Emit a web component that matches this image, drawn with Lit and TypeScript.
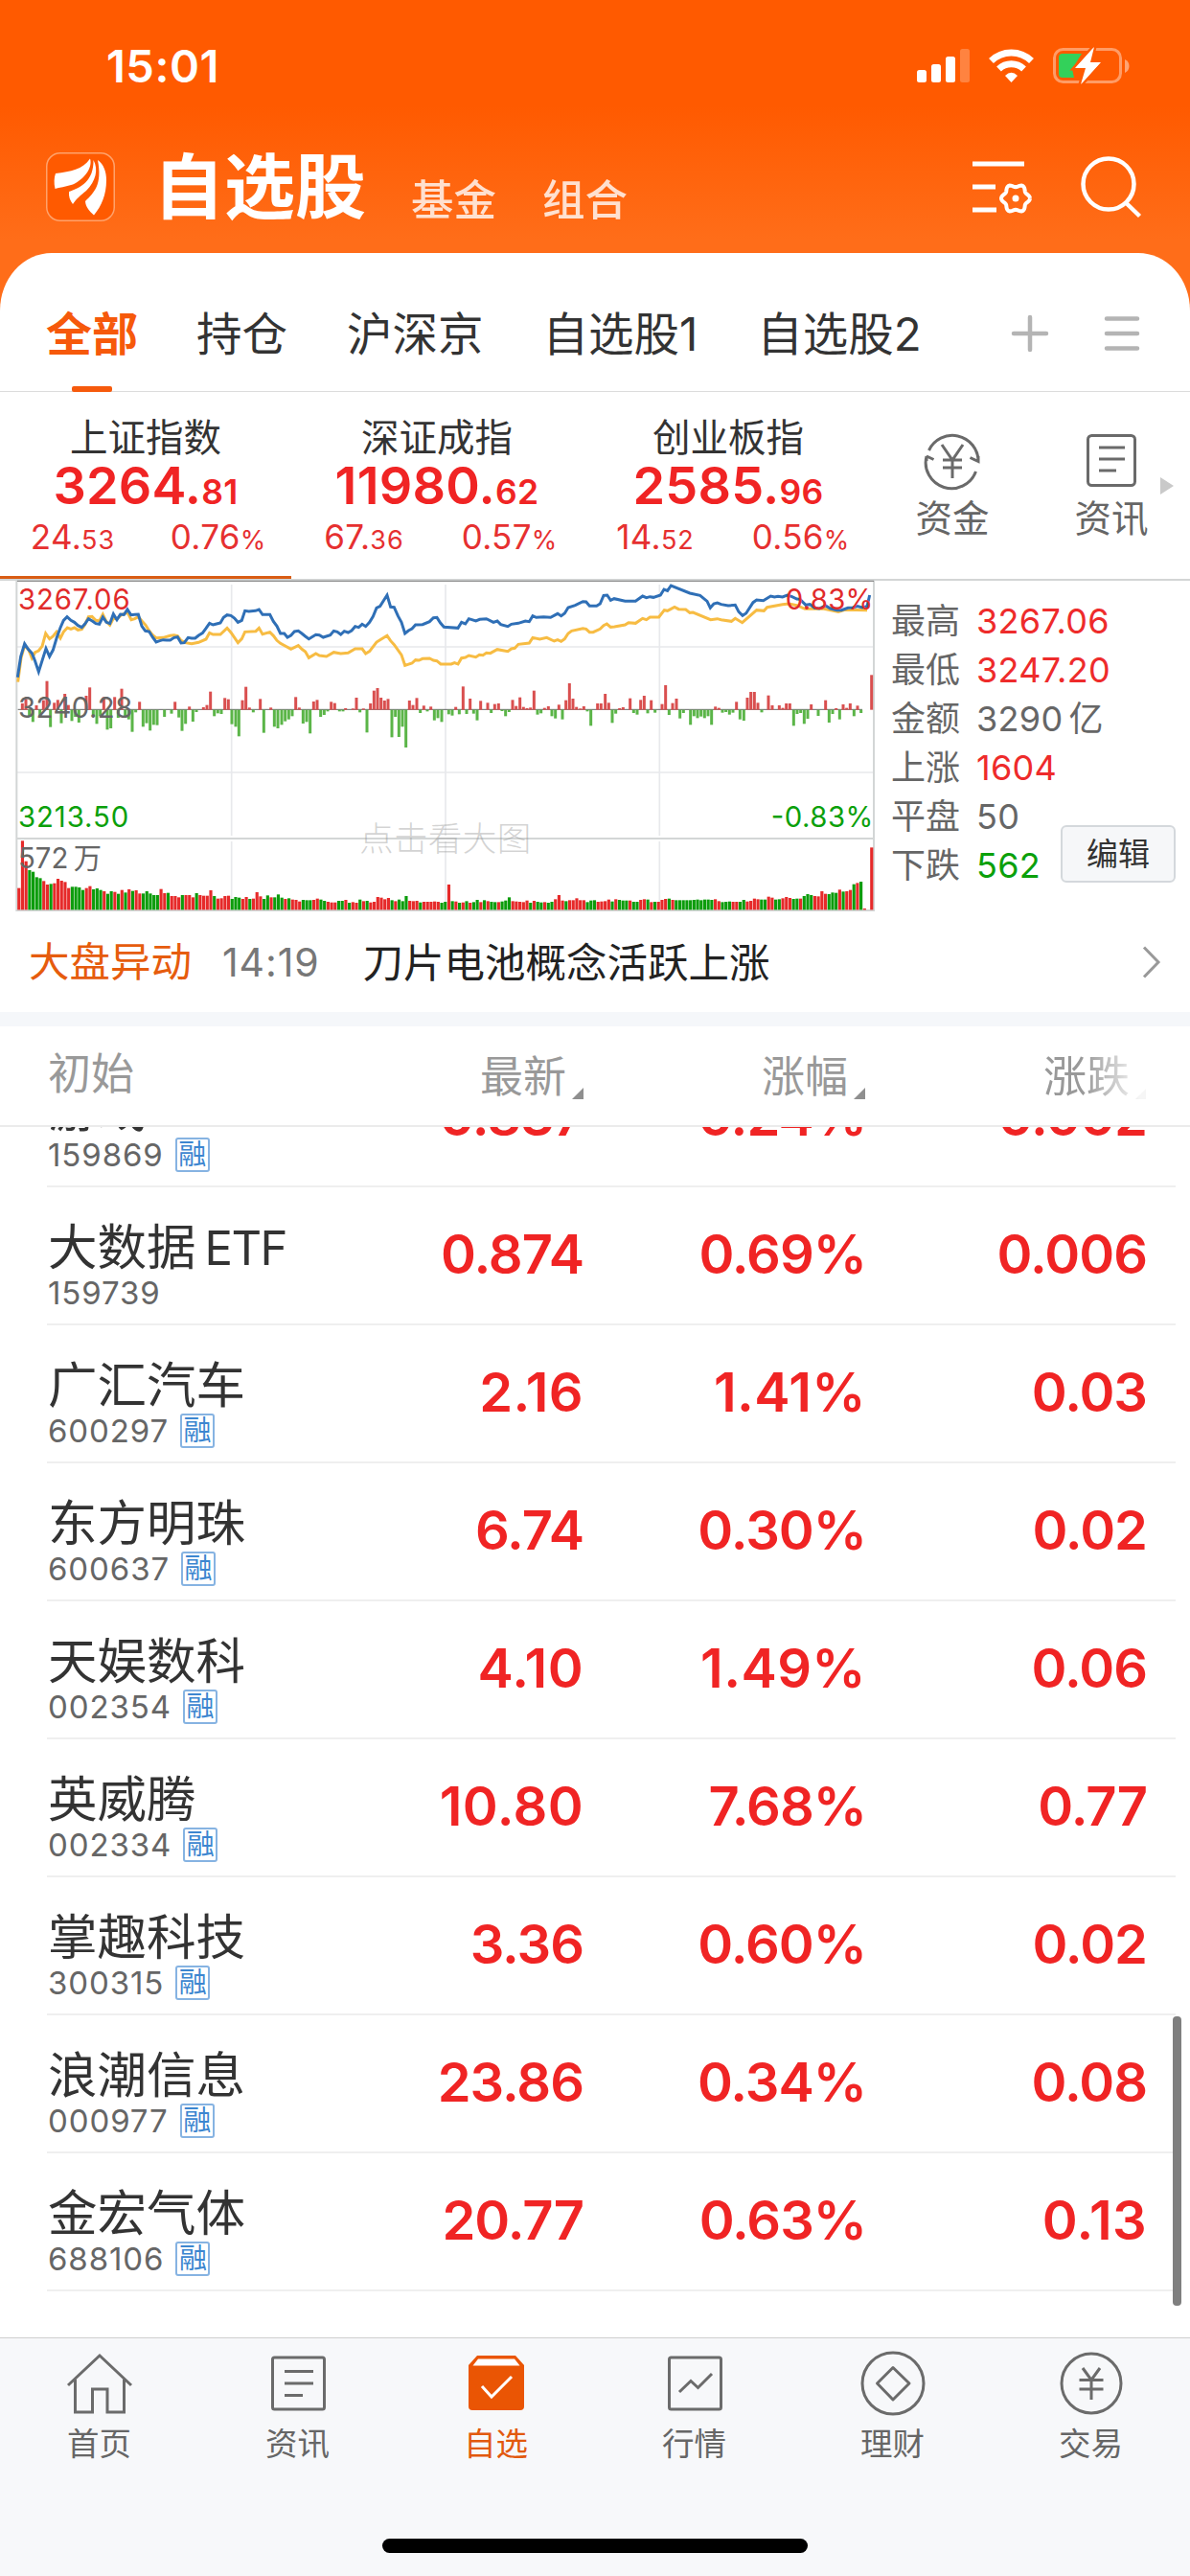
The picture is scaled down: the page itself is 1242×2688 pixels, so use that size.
import { LitElement, html, css, svg } from "lit";
import { customElement } from "lit/decorators.js";
import { classMap } from "lit/directives/class-map.js";

interface IndexQuote { name: string; int: string; dec: string; chg: string; chgDec: string; pct: string; active?: boolean }
interface Stock { name: string; latin?: string; code: string; margin: boolean; price: string; pct: string; chg: string }

const INDICES: IndexQuote[] = [
  { name: "上证指数", int: "3264.", dec: "81", chg: "24.", chgDec: "53", pct: "0.76", active: true },
  { name: "深证成指", int: "11980.", dec: "62", chg: "67.", chgDec: "36", pct: "0.57" },
  { name: "创业板指", int: "2585.", dec: "96", chg: "14.", chgDec: "52", pct: "0.56" },
];

const STATS: [string, string, string, string?][] = [
  ["最高", "3267.06", "up"],
  ["最低", "3247.20", "up"],
  ["金额", "3290", "flat", "亿"],
  ["上涨", "1604", "up"],
  ["平盘", "50", "flat"],
  ["下跌", "562", "down"],
];

const STOCKS: Stock[] = [
  { name: "游戏", latin: "ETF", code: "159869", margin: true, price: "0.837", pct: "0.24%", chg: "0.002" },
  { name: "大数据", latin: "ETF", code: "159739", margin: false, price: "0.874", pct: "0.69%", chg: "0.006" },
  { name: "广汇汽车", code: "600297", margin: true, price: "2.16", pct: "1.41%", chg: "0.03" },
  { name: "东方明珠", code: "600637", margin: true, price: "6.74", pct: "0.30%", chg: "0.02" },
  { name: "天娱数科", code: "002354", margin: true, price: "4.10", pct: "1.49%", chg: "0.06" },
  { name: "英威腾", code: "002334", margin: true, price: "10.80", pct: "7.68%", chg: "0.77" },
  { name: "掌趣科技", code: "300315", margin: true, price: "3.36", pct: "0.60%", chg: "0.02" },
  { name: "浪潮信息", code: "000977", margin: true, price: "23.86", pct: "0.34%", chg: "0.08" },
  { name: "金宏气体", code: "688106", margin: true, price: "20.77", pct: "0.63%", chg: "0.13" },
];

/* Intraday lines, in chart units (three per pixel). */
const BLUE = "55,350 65,285 77,245 88,262 100,275 110,300 121,333 132,298 144,260 155,285 166,265 178,225 189,195 199,172 210,161 222,172 233,178 244,188 256,194 266,183 277,167 289,174 300,182 311,184 322,162 333,178 344,182 355,152 366,170 377,153 388,154 399,138 410,155 422,154 433,153 444,190 455,205 467,207 478,225 489,240 500,236 511,233 522,234 533,234 545,226 556,224 567,243 577,242 589,226 600,228 611,228 622,219 634,212 645,197 656,181 667,186 678,183 690,180 700,163 711,155 723,157 734,165 745,178 757,172 767,142 779,144 800,142 811,138 822,154 845,154 856,175 867,190 878,213 890,213 900,225 911,219 922,207 934,205 945,213 956,222 967,230 989,217 1000,218 1012,225 1034,218 1045,205 1056,208 1067,216 1078,206 1090,210 1101,204 1112,191 1123,194 1134,184 1145,191 1157,178 1168,160 1179,133 1190,128 1212,93 1223,130 1234,131 1246,158 1257,178 1268,213 1279,204 1290,198 1301,186 1323,185 1345,176 1357,164 1368,163 1379,180 1390,193 1434,196 1445,178 1457,183 1468,167 1490,174 1502,169 1523,167 1545,178 1557,174 1568,185 1590,191 1601,184 1623,181 1645,174 1657,176 1668,158 1679,163 1702,161 1724,163 1746,151 1757,158 1768,150 1779,132 1801,125 1825,113 1835,114 1846,127 1868,127 1879,120 1890,94 1901,93 1912,109 1923,104 1957,112 1990,112 2012,96 2024,101 2035,98 2046,100 2068,93 2079,75 2090,79 2101,63 2160,87 2192,94 2214,112 2224,133 2235,120 2246,117 2258,122 2280,126 2302,124 2313,145 2325,157 2336,150 2358,116 2369,108 2390,110 2413,96 2425,99 2436,97 2450,99 2465,93 2480,98 2495,105 2505,106 2523,124 2536,122 2550,133 2565,135 2585,126 2600,135 2620,140 2635,140 2655,133 2670,132 2685,128 2700,132 2715,128 2723,93";
const YELLOW = "56,365 66,290 77,250 90,265 100,290 110,272 121,267 132,253 143,213 155,230 166,222 177,208 189,228 199,208 211,195 222,199 233,195 244,202 256,200 266,185 277,161 288,160 300,172 311,174 322,153 333,176 344,187 355,166 366,168 380,155 400,148 411,170 422,167 433,161 445,175 456,187 467,205 478,218 489,227 511,226 533,220 545,218 556,221 567,235 580,242 600,245 622,241 645,231 656,211 667,216 690,216 711,196 723,210 745,242 757,230 767,208 801,206 811,196 822,215 845,209 856,220 867,235 878,244 911,262 934,251 945,262 956,270 967,289 989,276 1000,282 1022,285 1045,272 1067,276 1090,274 1112,261 1134,261 1145,276 1157,269 1179,240 1190,233 1212,220 1223,236 1234,248 1257,280 1268,313 1290,306 1301,296 1312,297 1323,292 1345,291 1357,297 1368,299 1380,309 1413,309 1423,305 1434,309 1445,290 1457,288 1468,282 1490,287 1501,280 1512,281 1523,274 1535,275 1557,263 1590,269 1601,261 1612,259 1623,247 1657,243 1668,226 1690,231 1712,226 1735,237 1746,233 1757,238 1768,230 1779,213 1790,205 1825,197 1835,199 1846,209 1857,209 1879,199 1890,188 1900,183 1912,193 1924,192 1957,186 1968,179 1990,181 2012,166 2024,170 2035,162 2063,162 2080,140 2090,142 2112,130 2125,137 2147,138 2160,148 2170,147 2225,170 2246,167 2258,170 2290,175 2302,166 2324,179 2369,140 2392,142 2402,131 2450,122 2470,120 2495,125 2520,136 2580,136 2625,145 2645,139 2715,140";

/* Momentum bars: position and signed height. */
const MOMENTUM = "70:20 81:34 92:-20 103:-38 114:14 125:-20 136:30 147:90 158:-54 170:22 181:31 192:-42 203:50 214:15 225:-35 236:-22 247:-40 270:44 281:70 292:-20 303:-44 314:-20 325:40 336:-62 347:-58 359:40 370:-25 381:66 392:-25 403:-30 414:-69 425:-8 437:25 448:-53 459:-42 470:-65 481:-47 492:-48 515:-22 537:-12 548:25 560:-24 570:-66 581:-44 593:10 604:-37 615:-7 637:8 648:15 659:57 671:-20 682:-11 693:-13 704:37 715:33 726:-45 738:-53 748:-83 759:30 770:72 781:7 793:-8 815:34 826:-72 848:7 859:-53 870:-58 882:-47 893:-36 904:-30 915:-20 926:40 937:7 949:-43 960:-38 971:-74 982:26 993:31 1004:-22 1015:-16 1026:-5 1037:25 1048:21 1063:-5 1074:-5 1082:5 1105:4 1116:38 1127:-8 1138:4 1149:-71 1160:20 1171:60 1182:68 1193:38 1204:29 1215:34 1227:-86 1238:-22 1249:-85 1260:-53 1271:-118 1282:29 1293:15 1305:37 1316:-10 1327:13 1338:-5 1349:10 1360:-33 1371:-26 1383:-38 1405:-14 1416:-18 1427:9 1438:-14 1450:73 1461:-13 1472:35 1483:-12 1494:-33 1505:28 1527:22 1538:-10 1549:18 1561:20 1572:-4 1583:-20 1594:-7 1605:31 1616:12 1628:39 1639:9 1650:5 1661:7 1672:60 1683:-15 1694:-11 1705:6 1717:11 1728:-20 1739:-27 1750:16 1761:-30 1772:30 1783:83 1794:35 1805:9 1817:4 1828:11 1839:-5 1850:-50 1871:20 1882:20 1895:50 1906:22 1917:-41 1928:-12 1940:5 1951:8 1973:36 1984:-10 1995:-15 2006:31 2017:44 2028:-11 2039:30 2051:-9 2073:18 2084:77 2095:-16 2106:21 2118:35 2129:-27 2140:-10 2162:-47 2173:-20 2184:-26 2195:-21 2206:-26 2217:-20 2228:-47 2240:10 2251:6 2262:-9 2273:-7 2284:-15 2295:-9 2306:25 2317:-30 2329:-34 2340:38 2351:56 2362:56 2373:22 2385:-8 2406:45 2418:14 2440:14 2451:6 2462:20 2473:20 2485:-50 2496:-13 2507:-10 2518:-44 2529:-28 2540:17 2562:-19 2585:30 2596:-40 2607:-13 2618:5 2629:-30 2640:17 2651:6 2662:20 2674:-20 2685:13 2696:-10 2729:109"
  .split(" ").map((p) => p.split(":").map(Number));

/* Volume bars, one per minute group: colour letter and height. */
const VOLUME = (
  "r68 r216 r152 g124 g119 g102 g99 r90 r79 g81 r83 r97 r91 r87 r68 g72 g72 g70 g62 r68 r74 g64 g67 g62 r58 g50 g58 r56 g50 r62 g54 r64 g59 r61 r51 g51 g58 g51 g46 g46 r65 r52 g53 r43 r43 r39 g46 r46 r46 r39 g52 r46 r44 r44 r61 g43 r35 r36 r43 r44 g34 g40 g38 r34 r40 g34 r35 r55 r42 g34 g45 r39 g39 g48 g38 r34 g36 r32 r31 r26 g31 g30 g30 r31 r35 g32 g28 r25 r23 r23 g28 g28 r31 g22 r24 r22 g32 r27 g28 r23 r25 r40 r38 r33 r37 g30 r27 g32 g27 g43 r28 r27 r28 g23 r25 r25 r25 r26 r25 g22 g25 r79 " +
  "g27 r26 g22 r23 g27 r22 g24 g31 r24 g30 r27 g25 g24 r24 g26 g29 g39 r27 r26 r25 r24 r29 g22 r28 g25 g23 r24 g22 g25 r33 r46 r29 g27 r30 r30 r36 r30 r30 g24 g29 g30 r25 r26 r27 r32 g26 r33 g31 g29 g29 r29 g25 g25 r31 r33 g32 r24 g25 r25 r31 r34 g35 r31 g30 g30 g30 g30 g30 g31 g32 g30 g32 g32 g31 r33 r27 g24 g25 g26 r25 r25 g25 g31 r26 r28 r35 r33 g32 g32 r41 r38 g32 g33 r36 r40 r37 g34 g35 r35 g43 g49 g46 r43 r42 r58 r50 g49 g54 g53 r63 g57 r58 r62 g80 r84 g88 r4 r0 r195"
).split(" ").map((t) => ({ up: t[0] === "r", h: Number(t.slice(1)) }));
const PITCH = 2670 / (VOLUME.length - 1);

const gear = Array.from({ length: 73 }, (_, i) => {
  const t = (i * 5 * Math.PI) / 180;
  const r = 13.4 + 1.6 * Math.cos(6 * t);
  return `${(45 + r * Math.cos(t)).toFixed(2)},${(42 + r * Math.sin(t)).toFixed(2)}`;
}).join(" ");

const NAV = [
  { label: "首页", icon: svg`<path d="M2 34L35 3l33 31M9.500 28V62H27.500V38H43V62H60.500V28"/>` },
  { label: "资讯", icon: svg`<rect x="8.500" y="5" width="54" height="54" rx="2"/><path d="M21 19.500H51M21 32H51M21 44.500H40"/>` },
  { label: "自选", active: true, icon: svg`<path class="solid" d="M6 13L15 3H55L64 13V56q0 4-4 4H10q-4 0-4-4z"/><path class="lid" d="M16 6.500H54L59.500 13.500H10.500z"/><path class="tick" d="M20 35L30 46L51 25"/>` },
  { label: "行情", icon: svg`<rect x="8.500" y="5" width="54" height="54" rx="2"/><path d="M19 41L31 29.500L38.500 36.500L53 22"/>` },
  { label: "理财", icon: svg`<circle cx="35" cy="32" r="32"/><path stroke-linejoin="round" d="M35 15.500L52 32L35 49L18.500 32z"/>` },
  { label: "交易", icon: svg`<circle cx="35" cy="32" r="31"/><path d="M26 16L35 28.500L44 16M22.500 28.500H47.500M22.500 38H47.500M35 28V49"/>` },
];

@customElement("app-root")
export class AppRoot extends LitElement {
  static styles = css`
    :host {
      display: flex; flex-direction: column; width: 1242px; height: 2688px; overflow: hidden;
      background: #fff; color: #333; font-family: Inter, "Noto Sans CJK SC", sans-serif;
    }
    * { box-sizing: border-box; }
    svg { display: block; flex: none; overflow: visible; }
    .top { background: linear-gradient(#ff5a00 0, #ff5a00 110px, #ff6d19 250px, #ff6d19); height: 340px; flex: none; color: #fff; }
    .status { display: flex; height: 137px; align-items: center; justify-content: space-between; padding: 0 62px 0 111px; }
    .clock { font-size: 47px; font-weight: 600; line-height: 60px; letter-spacing: .5px; }
    .bar { display: flex; height: 116px; align-items: center; padding: 0 49px 0 48px; }
    .title { font-size: 74px; line-height: 80px; font-weight: 700; margin-left: 40px; }
    .seg { font-size: 44.500px; line-height: 60px; padding-top: 28px; opacity: .8; font-weight: 500; margin-left: 48px; }
    .seg.first { margin-left: 47px; }
    .bar .gear { margin-left: auto; }
    .bar .find { margin-left: 51px; }
    .sheet { background: #fff; border-radius: 54px 54px 0 0 / 60px 60px 0 0; margin-top: -76px; flex: 1; display: flex; flex-direction: column; min-height: 0; }
    .tabs { display: flex; height: 145px; padding-left: 48px; border-bottom: 1px solid #dcdcdc; flex: none; }
    .tab { font-size: 47.500px; line-height: 60px; padding-top: 55px; margin-right: 62px; display: flex; flex-direction: column; align-items: center; justify-content: space-between; height: 145px; white-space: nowrap; }
    .tab.on { color: #f6590b; font-weight: 700; font-size: 48px; margin-right: 61px; }
    .tab.on::after { content: ""; width: 42px; height: 6px; border-radius: 2px; background: #f65a0c; }
    .tabicons { display: flex; gap: 56px; margin-left: 31px; padding-top: 64px; }
    .indices { display: flex; height: 195px; flex: none; }
    .idx { width: 304px; display: flex; flex-direction: column; align-items: center; padding-top: 24px; border-bottom: 3px solid transparent; }
    .idx.on { border-color: #d95d14; }
    .iname { font-size: 39.500px; line-height: 48px; }
    .ival { color: #f02424; font-weight: 600; line-height: 52px; height: 52px; font-size: 54px; white-space: nowrap; letter-spacing: .2px; }
    .ival small { font-size: 35.500px; letter-spacing: .3px; }
    .isub { display: flex; width: 304px; color: #e63030; line-height: 36px; font-size: 35px; margin-top: 9px; white-space: nowrap; letter-spacing: .3px; }
    .isub div { width: 152px; text-align: center; }
    .isub small { font-size: 27px; letter-spacing: 1px; }
    .quick { display: flex; flex-direction: column; align-items: center; width: 166px; padding-top: 41px; color: #666; font-size: 38.500px; line-height: 46px; gap: 8px; }
    .quick.q1 { margin-left: -1px; }
    .more { padding-top: 89px; margin-left: -32px; }
    .market { display: flex; height: 347px; border-top: 2px solid #d3d5d5; padding-left: 17px; flex: none; }
    .market svg { margin-top: -2px; }
    .grid { stroke: #e8e9ec; stroke-width: 5; fill: none; }
    .frame { stroke: #d3d6d6; stroke-width: 6; fill: none; }
    .edge { stroke: #777; stroke-width: 3; }
    .axis { stroke: #666; stroke-width: 3; }
    .mu { fill: #d94f4f; } .md { fill: #5bb548; }
    .vu { fill: #e62a2a; } .vd { fill: #0c9c0c; }
    .lb { stroke: #2f6fb6; stroke-width: 9; fill: none; }
    .ly { stroke: #f7bc43; stroke-width: 9; fill: none; }
    .t { font-size: 88px; }
    .hint { font-size: 107px; fill: #8c8c8c; fill-opacity: .38; font-weight: 300; }
    .red { fill: #e12b2b; } .green { fill: #0ba00b; } .grey { fill: #666; }
    .stats { flex: 1; padding: 17px 0 0 17px; position: relative; }
    .stat { display: flex; font-size: 36px; line-height: 51px; color: #666; }
    .stat b { font-weight: 400; margin-left: 17px; letter-spacing: .3px; }
    .stat i { font-style: normal; margin-left: 6px; }
    .up { color: #ee2b2b; } .down { color: #0ba00b; }
    .edit { position: absolute; right: 15px; top: 255px; width: 120px; height: 60px; border: 2px solid #d4d8dc; border-radius: 6px; background: #f6f7f9; color: #333; font-size: 33px; line-height: 56px; text-align: center; }
    .news { display: flex; height: 105px; align-items: center; padding: 0 31px 0 30px; flex: none; font-size: 42.500px; line-height: 60px; }
    .news .tag { color: #e65c0d; }
    .news .time { color: #777; font-size: 41px; margin-left: 32px; letter-spacing: .9px; }
    .news .msg { color: #222; margin-left: 45px; padding-top: 3px; }
    .news svg { margin-left: auto; }
    .band { height: 15px; background: #f5f7fa; flex: none; }
    .head { display: grid; grid-template-columns: 313px 245px 294px 294px; padding-left: 50px; height: 105px; border-bottom: 2px solid #ebebeb; flex: none; color: #999; font-size: 45px; line-height: 60px; padding-top: 20px; }
    .hc { display: flex; justify-content: flex-end; gap: 5px; padding: 3px 0 0; }
    .hc::after { content: ""; width: 12px; height: 12px; margin: 41px -1px 0 1px; background: #8f8f8f; clip-path: polygon(100% 0, 100% 100%, 0 100%); }
    .hc.fade { -webkit-mask-image: linear-gradient(90deg, #000 78%, rgba(0,0,0,.08) 98%); mask-image: linear-gradient(90deg, #000 78%, rgba(0,0,0,.08) 98%); }
    .list { flex: 1; overflow: hidden; position: relative; min-height: 0; }
    .rows { margin-top: -81px; }
    .row { display: grid; grid-template-columns: 313px 245px 294px 294px; height: 144px; margin: 0 15px 0 49px; border-bottom: 2px solid #efefef; }
    .nm { font-size: 51.500px; line-height: 56px; height: 90px; padding-top: 34px; color: #333; white-space: nowrap; padding-left: 1px; }
    .nm em { font-style: normal; margin-left: 9px; font-size: 49px; letter-spacing: -1.500px; font-weight: 400; }
    .cd { display: flex; align-items: center; font-size: 33px; line-height: 40px; height: 40px; color: #666; letter-spacing: .9px; padding-left: 1px; }
    .bd { width: 36px; height: 36px; border: 2px solid #86b3e2; border-radius: 3px; color: #3c86d0; font-size: 29px; line-height: 31px; letter-spacing: 0; margin-left: 12px; display: flex; justify-content: center; }
    .num { color: #f02424; font-weight: 600; font-size: 56px; line-height: 60px; padding-top: 40px; text-align: right; letter-spacing: -1px; white-space: nowrap; margin-right: -2px; }
    .num.wide { letter-spacing: .4px; }
    .num.pc { margin-right: -3px; }
    .thumb { position: absolute; right: 9px; top: 928px; width: 9px; height: 302px; border-radius: 4px; background: #7f7f7f; }
    .nav { display: flex; height: 249px; background: #f7f8fa; border-top: 1px solid #cfcfcf; flex: none; position: relative; }
    .item { width: 207px; display: flex; flex-direction: column; align-items: center; padding-top: 15px; color: #666; font-size: 33.500px; line-height: 44px; gap: 7px; }
    .item svg { fill: none; stroke: #6b6b6b; stroke-width: 3; }
    .item.on { color: #e2590e; }
    .item .solid { fill: #ea5504; stroke: none; } .item .lid { fill: #fff; stroke: none; } .item .tick { stroke: #fff; }
    .home { position: absolute; left: 399px; top: 209px; width: 444px; height: 15px; border-radius: 8px; background: #000; }
  `;

  private chart() {
    return html`<svg width="896" height="347" viewBox="51 42 2688 1041">
      <path class="grid" d="M54 255H2736M54 648H2736M725 60V846M1395 60V846M2065 60V846M725 864V1078M1395 864V1078M2065 864V1078"/>
      <path class="frame" d="M52 45V1083M2736 45V1083M52 1080H2738M52 855H2736"/>
      <path class="edge" d="M54 49H2736"/>
      <path class="axis" d="M56 451H2700"/>
      ${MOMENTUM.map(([x, h]) => svg`<rect class=${h > 0 ? "mu" : "md"} x=${x - 4.5} y=${h > 0 ? 452 - h : 452} width="9" height=${Math.abs(h)}></rect>`)}
      ${VOLUME.map((v, i) => svg`<rect class=${v.up ? "vu" : "vd"} x=${59 + i * PITCH - 4.5} y=${1078 - v.h} width="9.5" height=${v.h}></rect>`)}
      <polyline class="ly" points=${YELLOW}/>
      <polyline class="lb" points=${BLUE}/>
      <text class="t red" x="57" y="137" textLength="350">3267.06</text>
      <text class="t red" x="2734" y="137" text-anchor="end" textLength="275">0.83%</text>
      <text class="t grey" x="57" y="478" textLength="358">3240.28</text>
      <text class="t green" x="57" y="820" textLength="346">3213.50</text>
      <text class="t green" x="2734" y="820" text-anchor="end" textLength="320">-0.83%</text>
      <text class="t grey" x="57" y="948" textLength="157">572</text>
      <text class="t grey" x="230" y="948">万</text>
      <text class="hint" x="1125" y="895" textLength="538">点击看大图</text>
    </svg>`;
  }

  /* Values holding the narrow digit 1 are set slightly looser. */
  private num(v: string) {
    return html`<div class=${classMap({ num: true, wide: v.includes("1"), pc: v.endsWith("%") })}>${v}</div>`;
  }

  render() {
    return html`
      <div class="top">
        <div class="status">
          <div class="clock">15:01</div>
          <svg width="223" height="40" viewBox="957 48 223 40" fill="#fff">
            <rect x="957" y="72" width="10" height="13" rx="2.500"/><rect x="972" y="66" width="10" height="19" rx="2.500"/>
            <rect x="987" y="58" width="10" height="27" rx="2.500"/><rect x="1002" y="50" width="10" height="35" rx="2.500" opacity=".25"/>
            <g fill="none" stroke="#fff" stroke-width="7"><path d="M1034.500 62.500A30 30 0 0 1 1076.500 62.500"/><path d="M1042.500 71A19 19 0 0 1 1068.500 71"/></g>
            <path d="M1055.500 85L1049 78Q1055.500 71.500 1062 78z"/>
            <rect x="1100.500" y="50.500" width="69" height="34" rx="9" fill="none" stroke="#fff" stroke-opacity=".4" stroke-width="3"/>
            <path d="M1174 61q4.500 2 4.500 7t-4.500 7z" opacity=".45"/>
            <path d="M1109 55H1129L1119 71L1121 80H1109q-4 0-4-4V59q0-4 4-4z" fill="#33d15a"/>
            <path d="M1142 48L1122 70H1133L1128 87L1149 64H1138z" stroke="#ff5a00" stroke-width="5" paint-order="stroke"/>
            <path d="M1141 49L1123 69.500H1134L1129 86L1148 64.500H1137z"/>
          </svg>
        </div>
        <div class="bar">
          <svg width="72" height="72" viewBox="0 0 72 72" fill="#fff">
            <rect x=".75" y=".75" width="70.500" height="70.500" rx="14" fill="#ff5a00" stroke="#ffa26b" stroke-width="1.500"/>
            <path d="M10 22C26 20 38 18 46 6.500C49 16 40 28 28 33.500C20 36 14 36.500 9.500 38C8 32 8.500 26 10 22z"/>
            <path d="M49.500 8C55 18 52 30 42 40C36 45 32 48 28 54C25 50 23.500 46 24 41C36 37 50 30 49.500 8z"/>
            <path d="M54 8C60 12 63 20 63 29C63 44 58 56 50 65.500C45 61 41.500 57 41 51C50 42 59 34 54 8z"/>
          </svg>
          <div class="title">自选股</div>
          <div class="seg first">基金</div>
          <div class="seg">组合</div>
          <svg class="gear" width="63" height="60" viewBox="0 0 63 60" fill="none" stroke="#fff" stroke-width="5">
            <path d="M0 6H54M0 30H24M0 54H25"/><polyline points=${gear} stroke-width="4"/><circle cx="45" cy="42" r="3.500" fill="#fff" stroke="none"/>
          </svg>
          <svg class="find" width="64" height="64" viewBox="0 0 64 64" fill="none" stroke="#fff" stroke-width="4.500">
            <circle cx="28" cy="29" r="26.500"/><path d="M46.500 49L60.500 62.500"/>
          </svg>
        </div>
      </div>
      <div class="sheet">
        <div class="tabs">
          <div class="tab on">全部</div><div class="tab">持仓</div><div class="tab">沪深京</div><div class="tab">自选股1</div><div class="tab">自选股2</div>
          <div class="tabicons">
            <svg width="40" height="40" viewBox="0 0 40 40" stroke="#b4b4b4" stroke-width="4.500" stroke-linecap="round"><path d="M20 3V37M3 20H37"/></svg>
            <svg width="40" height="40" viewBox="0 0 40 40" stroke="#b4b4b4" stroke-width="4.500" stroke-linecap="round"><path d="M4 4.500H36M4 20H36M4 35.500H36"/></svg>
          </div>
        </div>
        <div class="indices">
          ${INDICES.map((q) => html`<div class="idx ${q.active ? "on" : ""}">
            <div class="iname">${q.name}</div>
            <div class="ival">${q.int}<small>${q.dec}</small></div>
            <div class="isub"><div>${q.chg}<small>${q.chgDec}</small></div><div>${q.pct}<small>%</small></div></div>
          </div>`)}
          <div class="quick q1">
            <svg width="60" height="60" viewBox="0 0 60 60" fill="none" stroke="#6a6a6a" stroke-width="3">
              <path d="M5.500 20A27 27 0 0 1 57 31M48.500 27.500L57 31.500V26M54.500 42A27 27 0 0 1 3 26V31M3 26L10.500 29.500"/>
              <path d="M19 14L30 30L41 14M20 30H40M20 38H40M30 30V49"/>
            </svg>资金
          </div>
          <div class="quick">
            <svg width="60" height="60" viewBox="0 0 60 60" fill="none" stroke="#6a6a6a" stroke-width="3">
              <rect x="5.500" y="4.500" width="49" height="52" rx="4"/><path d="M17 17H44M17 29H44M17 41H35"/>
            </svg>资讯
          </div>
          <div class="more"><svg width="14" height="18" viewBox="0 0 14 18" fill="#c9c9c9"><path d="M0 0L14 9L0 18z"/></svg></div>
        </div>
        <div class="market">
          ${this.chart()}
          <div class="stats">
            ${STATS.map(([k, v, c, u]) => html`<div class="stat">${k}<b class=${c}>${v}</b>${u ? html`<i>${u}</i>` : ""}</div>`)}
            <div class="edit">编辑</div>
          </div>
        </div>
        <div class="news">
          <span class="tag">大盘异动</span><span class="time">14:19</span><span class="msg">刀片电池概念活跃上涨</span>
          <svg width="18" height="34" viewBox="0 0 18 34" fill="none" stroke="#999" stroke-width="3"><path d="M1 1.500L16 17L1 32.500"/></svg>
        </div>
        <div class="band"></div>
        <div class="head"><div>初始</div><div class="hc">最新</div><div class="hc">涨幅</div><div class="hc fade">涨跌</div></div>
        <div class="list">
          <div class="rows">
            ${STOCKS.map((s) => html`<div class="row">
              <div><div class="nm">${s.name}${s.latin ? html`<em>${s.latin}</em>` : ""}</div>
                <div class="cd">${s.code}${s.margin ? html`<span class="bd">融</span>` : ""}</div></div>
              ${this.num(s.price)}${this.num(s.pct)}${this.num(s.chg)}
            </div>`)}
          </div>
          <div class="thumb"></div>
        </div>
        <div class="nav">
          ${NAV.map((n) => html`<div class="item ${n.active ? "on" : ""}"><svg width="70" height="66" viewBox="0 0 70 66">${n.icon}</svg>${n.label}</div>`)}
          <div class="home"></div>
        </div>
      </div>`;
  }
}
